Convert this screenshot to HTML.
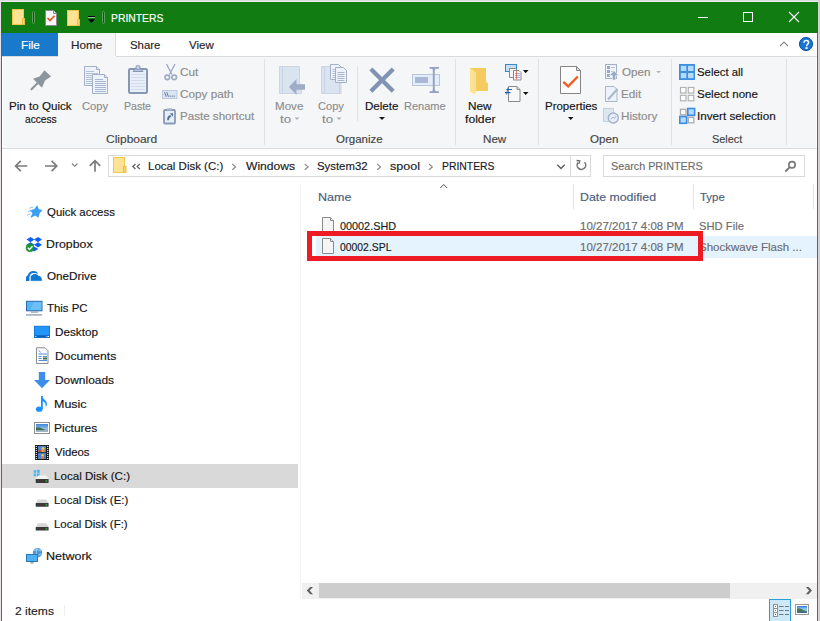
<!DOCTYPE html>
<html><head><meta charset="utf-8"><style>
html,body{margin:0;padding:0;}
body{width:820px;height:621px;position:relative;overflow:hidden;background:#fff;font-family:"Liberation Sans",sans-serif;}
.r{position:absolute;}
.t{position:absolute;font-size:12px;line-height:20px;white-space:nowrap;transform-origin:0 0;-webkit-text-stroke:0.16px currentColor;}
svg{position:absolute;overflow:visible}
</style></head><body>
<div class="r" style="left:0px;top:0px;width:820px;height:1px;background:#dcdcdc;"></div>
<div class="r" style="left:0px;top:1px;width:820px;height:1px;background:#f0eff0;"></div>
<div class="r" style="left:0px;top:0px;width:1px;height:621px;background:#e9e2e9;"></div>
<div class="r" style="left:818px;top:0px;width:1px;height:621px;background:#d9d3d9;"></div>
<div class="r" style="left:819px;top:0px;width:1px;height:621px;background:#cfcfcf;"></div>
<div class="r" style="left:1px;top:2px;width:817px;height:31px;background:#117c12;"></div>
<div class="r" style="left:1px;top:33px;width:1px;height:588px;background:#2b8b2d;"></div>
<div class="r" style="left:817px;top:33px;width:1px;height:588px;background:#2b8b2d;"></div>
<div class="r" style="left:2px;top:33px;width:56px;height:23px;background:#1979ca;"></div>
<div class="r" style="left:58px;top:33px;width:57px;height:24px;background:#f5f6f7;"></div>
<div class="r" style="left:115px;top:33px;width:1px;height:23px;background:#dadbdc;"></div>
<div class="r" style="left:2px;top:56px;width:56px;height:1px;background:#dadbdc;"></div>
<div class="r" style="left:116px;top:56px;width:701px;height:1px;background:#dadbdc;"></div>
<div class="r" style="left:3px;top:57px;width:813px;height:91px;background:#f5f6f7;"></div>
<div class="r" style="left:2px;top:148px;width:815px;height:1px;background:#dadbdc;"></div>
<div class="r" style="left:264px;top:59px;width:1px;height:86px;background:#e1e2e3;"></div>
<div class="r" style="left:455px;top:59px;width:1px;height:86px;background:#e1e2e3;"></div>
<div class="r" style="left:538px;top:59px;width:1px;height:86px;background:#e1e2e3;"></div>
<div class="r" style="left:671px;top:59px;width:1px;height:86px;background:#e1e2e3;"></div>
<div class="r" style="left:786px;top:59px;width:1px;height:86px;background:#e1e2e3;"></div>
<div class="r" style="left:357px;top:66px;width:1px;height:55px;background:#e1e2e3;"></div>
<div class="r" style="left:108px;top:155px;width:483px;height:22px;background:#fff;box-sizing:border-box;border:1px solid #d9d9d9"></div>
<div class="r" style="left:570px;top:156px;width:1px;height:20px;background:#d9d9d9;"></div>
<div class="r" style="left:603px;top:155px;width:202px;height:22px;background:#fff;box-sizing:border-box;border:1px solid #d9d9d9"></div>
<div class="r" style="left:2px;top:464px;width:296px;height:24px;background:#d9d9d9;"></div>
<div class="r" style="left:300px;top:184px;width:1px;height:415px;background:#f4f4f4;"></div>
<div class="r" style="left:573px;top:184px;width:1px;height:25px;background:#e5e5e5;"></div>
<div class="r" style="left:693px;top:184px;width:1px;height:25px;background:#e5e5e5;"></div>
<div class="r" style="left:813px;top:184px;width:1px;height:25px;background:#e5e5e5;"></div>
<div class="r" style="left:316px;top:236px;width:501px;height:22px;background:#e5f3ff;"></div>
<div class="r" style="left:302px;top:583px;width:515px;height:16px;background:#f0f0f0;"></div>
<div class="r" style="left:319px;top:583px;width:411px;height:15px;background:#cdcdcd;"></div>
<div class="r" style="left:64px;top:605px;width:1px;height:11px;background:#efefef;"></div>
<div class="r" style="left:769px;top:599px;width:22px;height:24px;background:#cde8f6;box-sizing:border-box;border:1px solid #26a0da"></div>

<svg width="820" height="621" viewBox="0 0 820 621" style="left:0;top:0">
<!-- ===== Title bar ===== -->
<g>
  <rect x="12.5" y="9.5" width="11" height="15" fill="#ffe394" stroke="#f2c84c" stroke-width="1"/>
  <rect x="22.5" y="18.5" width="2" height="6" fill="#fcd56a" stroke="#e9bd45" stroke-width="1"/>
  <rect x="32.5" y="11.5" width="2" height="12" rx="1" fill="#0b5e0c" stroke="#5c9e5d" stroke-width="1"/>
  <path d="M45.5 10.5 H53.5 L56.5 13.5 V25.5 H45.5 Z" fill="#f7f7f7" stroke="#8d8590" stroke-width="1"/>
  <path d="M53.5 10.5 V13.5 H56.5" fill="#dcdcdc" stroke="#8d8590" stroke-width="1"/>
  <path d="M47.5 18 L50 20.5 L54.5 15.8" fill="none" stroke="#e5541d" stroke-width="1.6"/>
  <rect x="67.5" y="10.5" width="11" height="15" fill="#ffe394" stroke="#f2c84c" stroke-width="1"/>
  <rect x="77.5" y="19.5" width="2" height="6" fill="#fcd56a" stroke="#e9bd45" stroke-width="1"/>
  <rect x="88" y="16" width="7" height="1" fill="#000"/>
  <rect x="88" y="17" width="7" height="1" fill="#8fc08f"/>
  <path d="M88 19.3 H95 L91.5 23 Z" fill="#000"/>
  <rect x="102.5" y="11.5" width="2" height="12" rx="1" fill="#0b5e0c" stroke="#5c9e5d" stroke-width="1"/>
</g>
<!-- window controls -->
<g stroke="#fff" stroke-width="1" fill="none">
  <path d="M698 17.5 H708"/>
  <rect x="743.5" y="12.5" width="9" height="9"/>
  <path d="M789 12 L799 22 M799 12 L789 22" stroke-width="1.1"/>
</g>
<!-- collapse & help -->
<path d="M780 46 L784 42 L788 46" fill="none" stroke="#8a8a8a" stroke-width="1.1"/>
<circle cx="806" cy="44" r="6.6" fill="#1b74d0" stroke="#0b5aae" stroke-width="1"/>
<path d="M804 42.7 C804 41.2 805 40.5 806.4 40.5 C807.8 40.5 808.6 41.3 808.6 42.5 C808.6 44 806.6 44.4 806.6 46 V46.2" fill="none" stroke="#fff" stroke-width="1.5"/>
<rect x="805.5" y="47.2" width="2.1" height="1.8" fill="#fff"/>

<!-- ===== Ribbon: Clipboard ===== -->
<g>
  <path d="M44.5 70.2 L51 76.4 L45 80.5 L42 87.8 L33 78.8 L39.5 76.5 Z" fill="#8d969d"/>
  <path d="M37.5 83.3 L31.5 89.3" stroke="#8d969d" stroke-width="2.2" stroke-linecap="round"/>
</g>
<g stroke="#a3b0c8" stroke-width="1" >
  <path d="M84.5 66.5 H96.5 L99.5 69.5 V85.5 H84.5 Z" fill="#eef3fb"/>
  <path d="M96.5 66.5 V69.5 H99.5" fill="#dde5f2"/>
  <path d="M86 71.5 H94 M86 73.5 H98 M86 75.5 H92 M86 77.5 H92 M86 79.5 H92 M86 81.5 H92 M86 83.5 H92" stroke="#b3bfd3"/>
  <path d="M92.5 74.5 H104.5 L107.5 77.5 V93.5 H92.5 Z" fill="#eef3fb"/>
  <path d="M104.5 74.5 V77.5 H107.5" fill="#dde5f2"/>
  <path d="M95 79.5 H103 M95 81.5 H106 M95 83.5 H106 M95 85.5 H106 M95 87.5 H106 M95 89.5 H106 M95 91.5 H106" stroke="#a9b6cc"/>
</g>
<g>
  <rect x="129" y="69" width="18" height="24" rx="1.2" fill="#e9eff9" stroke="#8797b3" stroke-width="2"/>
  <path d="M131 74.5 H145 M131 77.5 H145 M131 80.5 H145 M131 83.5 H145 M131 86.5 H145 M131 89.5 H145" stroke="#d3dcea" stroke-width="1"/>
  <path d="M133 71.5 L135 69 H141 L143 71.5 Z" fill="#b9c5da" stroke="#8797b3" stroke-width="1"/>
  <rect x="136" y="65.5" width="4" height="4" rx="1.5" fill="#c5d0e2" stroke="#8797b3" stroke-width="1"/>
</g>
<g fill="none" stroke="#9aa9c3" stroke-width="1.3">
  <path d="M166.5 64 L172 74.5 M175 64 L169.5 74.5"/>
  <circle cx="167.3" cy="77.3" r="2.3" stroke-width="1.6"/>
  <circle cx="174.2" cy="77.3" r="2.3" stroke-width="1.6"/>
</g>
<g>
  <rect x="162.5" y="90.5" width="14.5" height="8" fill="#dae4f2" stroke="#bcc8dc" stroke-width="1"/>
  <path d="M164.6 92.3 L166.2 96.7 M166.8 92.3 L168.4 96.7" fill="none" stroke="#536c90" stroke-width="0.9"/>
  <rect x="169.5" y="95.6" width="1.1" height="1.1" fill="#536c90"/><rect x="171.6" y="95.6" width="1.1" height="1.1" fill="#536c90"/><rect x="173.7" y="95.6" width="1.1" height="1.1" fill="#536c90"/>
</g>
<g>
  <rect x="164" y="110" width="11" height="13.5" rx="1" fill="#e8eef8" stroke="#8a9ab5" stroke-width="1.8"/>
  <rect x="167" y="108.3" width="5" height="2.2" fill="#a9b7cf"/>
  <path d="M168 120.2 C168 117.5 169 116.3 170.8 116" fill="none" stroke="#546f96" stroke-width="1.8"/>
  <path d="M169.8 113.3 H173 V116.8 Z" fill="#546f96"/>
</g>
<!-- ===== Organize ===== -->
<g>
  <path d="M279.5 66.5 H299.5 V83 L301.5 85 V93.5 H279.5 Z" fill="#dae3f0" stroke="#cbd5e4" stroke-width="1"/>
  <path d="M282.5 67 V93" stroke="#c8d2e2" stroke-width="1"/>
  <path d="M289 87 L296.5 79 V84.3 H305 V89.8 H296.5 V95 Z" fill="#9dadc6"/>
</g>
<g>
  <path d="M321.5 66.5 H341 V93.5 H321.5 Z" fill="#dae3f0" stroke="#cbd5e4" stroke-width="1"/>
  <path d="M324.5 67 V93 M339.5 82 V93" stroke="#c8d2e2" stroke-width="1"/>
  <path d="M330.5 64.5 H338.5 L341.5 67.5 V79.5 H330.5 Z" fill="#eef3fb" stroke="#a3b0c8" stroke-width="1"/>
  <path d="M332.5 69.5 H336 M332.5 71.5 H336 M332.5 73.5 H336 M332.5 75.5 H336 M332.5 77.5 H336" stroke="#b3bfd3" stroke-width="1"/>
  <path d="M335.5 67.5 H343.5 L346.5 70.5 V82.5 H335.5 Z" fill="#eef3fb" stroke="#a3b0c8" stroke-width="1"/>
  <path d="M337.5 72.5 H344.5 M337.5 74.5 H344.5 M337.5 76.5 H344.5 M337.5 78.5 H344.5 M337.5 80.5 H344.5" stroke="#a9b6cc" stroke-width="1"/>
</g>
<path d="M370.9 68.9 L393.2 91.2 M393.2 68.9 L370.9 91.2" stroke="#8093b3" stroke-width="4.3"/>
<g>
  <rect x="412.5" y="74.5" width="27" height="11" fill="#e5edfa" stroke="#b8c6dd" stroke-width="1"/>
  <rect x="415" y="77" width="13" height="6" fill="#a8b8d2"/>
  <path d="M433.8 68 V92" stroke="#95a5c0" stroke-width="2"/>
  <path d="M429.5 67.8 H439 M429.5 92.3 H439" stroke="#95a5c0" stroke-width="1.6"/>
  <path d="M430 68 Q433.8 68 433.8 71 Q433.8 68 438.5 68 M430 92 Q433.8 92 433.8 89 Q433.8 92 438.5 92" fill="none" stroke="#95a5c0" stroke-width="1.2"/>
</g>
<path d="M379 117 H385 L382 120 Z" fill="#1a1a1a"/>
<path d="M294.5 117.5 H299.5 L297 120 Z" fill="#b0b0b0"/>
<path d="M336.5 117.5 H341.5 L339 120 Z" fill="#b0b0b0"/>
<!-- ===== New ===== -->
<g>
  <path d="M470 68 H486 V81.5 L488 83.5 V91 H470 Z" fill="#f3cb5e"/>
  <path d="M470 68 L476 72.5 V91 L475 94.6 L470 91.6 Z" fill="#fbe293"/>
</g>
<g>
  <rect x="505.5" y="64.5" width="11" height="7" fill="#c4ddf2" stroke="#3b88c4" stroke-width="1"/>
  <path d="M509.5 68.5 H515.5 L517.5 70.5 V77.5 H509.5 Z" fill="#f4f4f4" stroke="#8a8a8a" stroke-width="1"/>
  <path d="M513.5 70.5 H519 L521 72.5 V80 H513.5 Z" fill="#f8f8f8" stroke="#8a8a8a" stroke-width="1"/>
  <path d="M515 73.5 H520 M515 75.5 H520 M515 77.5 H520" stroke="#6f9fe0" stroke-width="0.8"/>
  <path d="M516.5 71 V79.5" stroke="#e06060" stroke-width="0.8"/>
</g>
<path d="M523 70 H528.5 L525.7 73.2 Z" fill="#111"/>
<g>
  <path d="M508.5 86.5 H517 L520 89.5 V101.5 H508.5 Z" fill="#f7f7f7" stroke="#8a8a8a" stroke-width="1"/>
  <path d="M517 86.5 V89.5 H520" fill="#e0e0e0" stroke="#8a8a8a" stroke-width="1"/>
  <path d="M506.5 89.5 H512 M505 92.7 H510.5" stroke="#1f64b4" stroke-width="1.2"/>
  <path d="M508 87.5 L506.5 94.5" stroke="#1f64b4" stroke-width="0.9"/>
</g>
<path d="M523 92 H528.5 L525.7 95 Z" fill="#111"/>
<!-- ===== Open ===== -->
<g>
  <path d="M560.5 66.5 H576.5 L580.5 70.5 V93.5 H560.5 Z" fill="#fbfbfb" stroke="#858585" stroke-width="1"/>
  <path d="M576.5 66.5 V70.5 H580.5 Z" fill="#dedede" stroke="#858585" stroke-width="1"/>
  <path d="M563.3 81.8 L568.2 86.4 L577.8 76.5" fill="none" stroke="#f25a1e" stroke-width="2.3"/>
</g>
<path d="M568 117 H573.5 L570.7 120 Z" fill="#111"/>
<g>
  <rect x="605.5" y="64.5" width="11" height="14" fill="#eef3fb" stroke="#a3b0c8" stroke-width="1"/>
  <rect x="607" y="66" width="3" height="3" fill="#9aa9c3"/><rect x="607" y="70" width="3" height="3" fill="#9aa9c3"/><rect x="607" y="74" width="3" height="3" fill="#9aa9c3"/>
  <path d="M611 67.5 H615 M611 71.5 H615" stroke="#b8c4d8" stroke-width="1"/>
  <path d="M614 70.8 L618.8 75.6 H615.6 V80 H612.4 V75.6 H609.2 Z" fill="#9aa9c3" stroke="#f5f6f7" stroke-width="0.6"/>
</g>
<path d="M656 71 H661 L658.5 73.3 Z" fill="#b7b7b7"/>
<g>
  <path d="M605.5 86.5 H614 L617 89.5 V101.5 H605.5 Z" fill="#eef3fb" stroke="#a9b6cc" stroke-width="1"/>
  <path d="M608 99.5 L617.5 89" stroke="#a9b6cc" stroke-width="2"/>
</g>
<g>
  <rect x="603.5" y="108.5" width="10" height="13" fill="#dee6f2" stroke="#c4cfe0" stroke-width="1"/>
  <circle cx="613.3" cy="118" r="5" fill="#e8eef8" stroke="#a3b1c9" stroke-width="1.4"/>
  <path d="M611 119 L613 117 L614.5 118.5 L616 116" fill="none" stroke="#a3b1c9" stroke-width="0.9"/>
</g>
<!-- ===== Select ===== -->
<g>
  <rect x="679" y="64" width="16" height="16" fill="#3a8ee3"/>
  <rect x="680.8" y="65.8" width="5.5" height="5.2" fill="#b4dafd"/>
  <rect x="688" y="65.8" width="5.5" height="5.2" fill="#b4dafd"/>
  <rect x="680.8" y="73" width="5.5" height="5.2" fill="#b4dafd"/>
  <rect x="688" y="73" width="5.5" height="5.2" fill="#b4dafd"/>
</g>
<g fill="#fff" stroke="#b2b2b2" stroke-width="1.2">
  <rect x="680.5" y="87.5" width="5.5" height="5.5"/>
  <rect x="688.3" y="87.5" width="5.5" height="5.5"/>
  <rect x="680.5" y="95.3" width="5.5" height="5.5"/>
  <rect x="688.3" y="95.3" width="5.5" height="5.5"/>
</g>
<g>
  <rect x="680.5" y="109.3" width="5.5" height="5.5" fill="#fff" stroke="#ababab" stroke-width="1.3"/>
  <rect x="688.3" y="117.3" width="5.5" height="5.5" fill="#fff" stroke="#ababab" stroke-width="1.3"/>
  <rect x="687.8" y="108.5" width="6.8" height="6.8" fill="#b4dafd" stroke="#3a8ee3" stroke-width="1.6"/>
  <rect x="679.8" y="116.5" width="6.8" height="6.8" fill="#b4dafd" stroke="#3a8ee3" stroke-width="1.6"/>
</g>

<!-- ===== Address bar ===== -->
<g fill="none" stroke="#7b7b7b" stroke-width="1.7">
  <path d="M15.5 166 H27.3 M20.8 160.8 L15.6 166 L20.8 171.2"/>
  <path d="M45 166 H56.8 M51.6 160.8 L56.8 166 L51.6 171.2"/>
  <path d="M95 160.5 V171.8 M89.8 165.8 L95 160.6 L100.2 165.8"/>
  <path d="M72 163.5 L74.7 166.3 L77.4 163.5" stroke-width="1.1"/>
</g>
<g>
  <rect x="113.5" y="157.5" width="11" height="15" fill="#ffe394" stroke="#f2c84c" stroke-width="1"/>
  <rect x="123.5" y="166.5" width="2.5" height="6" fill="#fcd56a" stroke="#e9bd45" stroke-width="1"/>
</g>
<path d="M135.5 164 L132.8 166.5 L135.5 169 M139.8 164 L137.1 166.5 L139.8 169" fill="none" stroke="#606060" stroke-width="1.2"/>
<g fill="none" stroke="#8a8a8a" stroke-width="1.2">
  <path d="M232.3 164 L235.6 166.9 L232.3 169.8"/>
  <path d="M304.8 164 L308.1 166.9 L304.8 169.8"/>
  <path d="M377.2 164 L380.5 166.9 L377.2 169.8"/>
  <path d="M429 164 L432.3 166.9 L429 169.8"/>
</g>
<path d="M557.3 164.8 L561 168.5 L564.7 164.8" fill="none" stroke="#606060" stroke-width="1.5"/>
<path d="M584.6 162.2 A4.3 4.3 0 1 1 578 162.5" fill="none" stroke="#707070" stroke-width="1.5"/>
<path d="M576.5 160.5 L579.8 160.8 L578.8 164" fill="none" stroke="#707070" stroke-width="1.3"/>
<circle cx="792" cy="164.8" r="3.2" fill="none" stroke="#767676" stroke-width="1.6"/>
<path d="M789.5 167.3 L785.3 171.5" stroke="#767676" stroke-width="1.8"/>
<!-- header sort caret -->
<path d="M440.3 188 L443.7 184.5 L447.1 188" fill="none" stroke="#4f4f4f" stroke-width="1"/>
<!-- file icons -->
<g>
  <path d="M322.5 217.5 H330.5 L333.5 220.5 V233 H322.5 Z" fill="#f5f5f5" stroke="#8a8a8a" stroke-width="1"/>
  <path d="M330.5 217.5 V220.5 H333.5" fill="#e4e4e4" stroke="#8a8a8a" stroke-width="1"/>
  <path d="M322.5 238.5 H330.5 L333.5 241.5 V253.5 H322.5 Z" fill="#f5f5f5" stroke="#8a8a8a" stroke-width="1"/>
  <path d="M330.5 238.5 V241.5 H333.5" fill="#e4e4e4" stroke="#8a8a8a" stroke-width="1"/>
</g>
<!-- scrollbar arrows -->
<path d="M313 587 H310.2 L306.8 590.6 L310.2 594.2 H313 L309.6 590.6 Z" fill="#606060"/>
<path d="M805.8 587 H808.6 L812 590.6 L808.6 594.2 H805.8 L809.2 590.6 Z" fill="#606060"/>
<!-- view buttons -->
<g>
  <rect x="773.5" y="604.5" width="4" height="12" fill="#fff" stroke="#8e8e8e" stroke-width="1"/>
  <path d="M773.5 608.5 H777.5 M773.5 612.5 H777.5" stroke="#8e8e8e" stroke-width="1"/>
  <rect x="775" y="606" width="1" height="1" fill="#2a8a4a"/>
  <rect x="775" y="610" width="1" height="1" fill="#3f8fff"/>
  <rect x="775" y="614" width="1" height="1" fill="#e02020"/>
  <path d="M779 606.5 H783.5 M785 606.5 H789 M779 610.5 H783.5 M785 610.5 H789 M779 614.5 H783.5 M785 614.5 H789" stroke="#777" stroke-width="1"/>
</g>
<g>
  <rect x="795.5" y="604.5" width="13" height="10" fill="#fff" stroke="#999" stroke-width="1"/>
  <rect x="797" y="606" width="10" height="7" fill="#8cc0ec"/>
  <rect x="797" y="606" width="10" height="1.5" fill="#3f86dc"/>
  <path d="M797 608.5 Q801 607.8 804 610.5 L807 611.5 V613 H797 Z" fill="#4d7a58"/>
  <path d="M797 611.5 H807 V613 H797 Z" fill="#3a6aa0" opacity="0.8"/>
</g>

<!-- ===== Nav pane ===== -->
<!-- quick access star -->
<g>
  <path d="M37.2 205.8 L38.6 209.4 L42.2 210.3 L39.4 213 L38.2 217.3 L35.2 215.2 L30.8 217.5 L32.8 213.2 L30.2 210.4 L34.2 209.6 Z" fill="#3aa0f5" stroke="#1e88e5" stroke-width="0.5"/>
  <path d="M29 208.3 L33.5 207 M28 211.5 L31.5 210.8 M27 215.2 L30.5 214" stroke="#7fc0f2" stroke-width="0.9"/>
</g>
<!-- dropbox -->
<g fill="#0d62f5">
  <path d="M30.5 237 L34.5 239.6 L30.5 242.2 L26.5 239.6 Z"/>
  <path d="M38 237 L42 239.6 L38 242.2 L34 239.6 Z"/>
  <path d="M30.5 242.2 L34.5 244.8 L30.5 247.4 L26.5 244.8 Z"/>
  <path d="M38 242.2 L42 244.8 L38 247.4 L34 244.8 Z"/>
  <path d="M34.2 246.5 L38.2 249 L34.2 251.6 L30.2 249 Z"/>
</g>
<circle cx="30" cy="247.8" r="4" fill="#1f9a3a" stroke="#157a2a" stroke-width="0.5"/>
<path d="M27.8 247.8 L29.5 249.5 L32.5 246.2" fill="none" stroke="#fff" stroke-width="1.3"/>
<!-- onedrive -->
<path d="M26 281 V277.8 C26 276.6 26.8 275.6 27.8 275.2 C28.6 272.6 30.8 271.2 33.3 271.1 C35.3 271 37 271.8 37.9 273.4 L36.2 274.3 C35.4 273.3 34.4 272.9 33.2 273 C31.2 273.2 30 274.6 29.6 276.4 V281 Z" fill="#0f78d4"/>
<path d="M30.2 281.3 V277.3 C30.2 276 31 275.2 32 275 C32.6 273.8 33.8 273.6 35 273.6 C36.8 273.6 37.8 274.5 38.6 275.6 C40 275.4 41 276.3 41.5 277.6 C42.2 278 42.3 279 42.3 281.3 Z" fill="#0f78d4" stroke="#fff" stroke-width="0.9"/>
<!-- this pc -->
<g>
  <rect x="26.5" y="301.3" width="15.5" height="9.5" fill="#55b4f4" stroke="#2a6aa8" stroke-width="1"/>
  <path d="M34 302 L41.5 302 L41.5 310 L30 310 Z" fill="#7cc8f8" opacity="0.6"/>
  <rect x="31" y="311.3" width="7" height="1.5" fill="#9ab0c4"/>
  <rect x="26" y="314" width="16" height="1.8" fill="#a9b9c8"/>
</g>
<!-- desktop -->
<g>
  <rect x="34.5" y="326.3" width="15" height="11.2" fill="#2196f8" stroke="#1177dd" stroke-width="1"/>
  <rect x="35" y="335.3" width="14" height="2" fill="#0b5fb8"/>
  <rect x="35.3" y="336" width="1" height="1" fill="#fff"/><rect x="46.5" y="336" width="1" height="1" fill="#fff"/><rect x="48" y="336" width="1" height="1" fill="#fff"/>
</g>
<!-- documents -->
<g>
  <path d="M36.5 347.8 H45 L48 350.8 V363.5 H36.5 Z" fill="#fafafa" stroke="#8d8d8d" stroke-width="1"/>
  <path d="M39 350.5 L40.5 352.5 M38.5 354 H47 M38.5 356.5 H41.5 M43 356.5 H47 M38.5 358.5 H41.5 M38.5 360.5 H47" stroke="#3d86d6" stroke-width="0.9"/>
  <rect x="43" y="357.5" width="4" height="2" fill="#3a6a4a"/>
</g>
<!-- downloads -->
<path d="M38.8 372 H45.2 V380 H50 L42 388.3 L34 380 H38.8 Z" fill="#3b8fe8"/>
<!-- music -->
<g fill="#1e90ff">
  <ellipse cx="39.2" cy="409.2" rx="3.3" ry="2.6"/>
  <rect x="41" y="396" width="1.8" height="13"/>
  <path d="M41.5 396 C42.5 399 47.8 400.5 46.8 405.5 C46.3 406.5 45.8 406.8 45.5 406.5 C46.2 403.5 44.5 401.8 42 401 Z"/>
</g>
<!-- pictures -->
<defs>
  <linearGradient id="sky" x1="0" y1="0" x2="0" y2="1"><stop offset="0" stop-color="#3d86d8"/><stop offset="1" stop-color="#cfe6f5"/></linearGradient>
</defs>
<g>
  <rect x="34.5" y="422.5" width="15" height="11" fill="#fff" stroke="#8f8f8f" stroke-width="1"/>
  <rect x="36" y="424" width="12" height="8" fill="url(#sky)"/>
  <path d="M36 427.5 Q39.5 426.5 42.5 428.8 Q45 430.3 48 429.8 V430.5 H36 Z" fill="#3f6e50"/>
  <rect x="36" y="430.5" width="12" height="1.5" fill="#9fb8c8"/>
</g>
<!-- videos -->
<g>
  <rect x="35" y="445" width="14" height="15" fill="#1e1e1e"/>
  <rect x="38" y="446" width="8" height="6.3" fill="#4a82d0"/>
  <rect x="38" y="453" width="8" height="6" fill="#4a82d0"/>
  <circle cx="43" cy="448.5" r="1.6" fill="#f0c838"/>
  <rect x="41.5" y="449.5" width="3" height="2.5" fill="#e8a030"/>
  <rect x="38.5" y="450" width="2.5" height="2" fill="#c84040"/>
  <circle cx="42.5" cy="455.5" r="1.4" fill="#f0c838"/>
  <rect x="41" y="456.5" width="3" height="2.5" fill="#e07a30"/>
  <path d="M36.3 446 V459.5 M47.7 446 V459.5" stroke="#f4f4f4" stroke-width="1.1" stroke-dasharray="1.1 0.9"/>
</g>
<!-- drives -->
<g>
  <g fill="#48baf2">
  <rect x="33.6" y="470.2" width="2.6" height="2.6"/><rect x="36.9" y="469.8" width="2.9" height="3"/>
  <rect x="33.6" y="473.5" width="2.6" height="2.6"/><rect x="36.9" y="473.5" width="2.9" height="3"/>
  </g>
  <path d="M35.8 479 L38.2 475.6 H46.2 L48.6 479 Z" fill="#f2f2f2"/>
  <rect x="35.7" y="479" width="12.9" height="3.9" rx="0.6" fill="#3a3a3a"/>
  <rect x="45.6" y="480.5" width="1.6" height="1.1" fill="#3cd048"/>
</g>
<g>
  <path d="M35.8 503 L38.2 499.5 H46.2 L48.6 503 Z" fill="#d6d6d6"/>
  <rect x="35.7" y="503" width="12.9" height="3.7" rx="0.6" fill="#3a3a3a"/>
  <rect x="45.6" y="504.4" width="1.6" height="1.1" fill="#3cd048"/>
</g>
<g>
  <path d="M35.8 527 L38.2 523.3 H46.2 L48.6 527 Z" fill="#d6d6d6"/>
  <rect x="35.7" y="527" width="12.9" height="3.6" rx="0.6" fill="#3a3a3a"/>
  <rect x="45.6" y="528.4" width="1.6" height="1.1" fill="#3cd048"/>
</g>
<!-- network -->
<g>
  <circle cx="37.5" cy="552.8" r="4.7" fill="#4a9ad6"/>
  <path d="M34 550.5 Q37 548.5 41 550.8 M34.5 554.5 Q37.5 556.5 41.5 553.8 M37 548.3 Q35.5 552.5 37.5 557.3" fill="none" stroke="#b5dcf5" stroke-width="0.8"/>
  <rect x="26.5" y="554.5" width="11" height="7" fill="#4eb2f2" stroke="#2a78b8" stroke-width="1"/>
  <rect x="30.5" y="562" width="3" height="1.5" fill="#8aa0b0"/>
</g>
</svg>

<div class="t" style="left:110.70px;top:8px;color:#ffffff;font-size:11.5px;transform:scaleX(0.9000)">PRINTERS</div>
<div class="t" style="left:20.68px;top:35px;color:#ffffff;font-size:11.5px;transform:scaleX(1.0176)">File</div>
<div class="t" style="left:71.18px;top:35px;color:#262626;font-size:11.5px;transform:scaleX(1.0172)">Home</div>
<div class="t" style="left:130.26px;top:35px;color:#262626;font-size:11.5px;transform:scaleX(0.9914)">Share</div>
<div class="t" style="left:189.00px;top:35px;color:#262626;font-size:11.5px;transform:scaleX(1.0000)">View</div>
<div class="t" style="left:9.29px;top:96px;color:#141414;font-size:11.5px;transform:scaleX(1.0098)">Pin to Quick</div>
<div class="t" style="left:25.40px;top:109px;color:#141414;font-size:11.5px;transform:scaleX(0.8857)">access</div>
<div class="t" style="left:81.62px;top:96px;color:#8c8c8c;font-size:11.5px;transform:scaleX(0.9769)">Copy</div>
<div class="t" style="left:123.68px;top:96px;color:#8c8c8c;font-size:11.5px;transform:scaleX(0.9179)">Paste</div>
<div class="t" style="left:180.48px;top:62px;color:#8c8c8c;font-size:11.5px;transform:scaleX(1.0235)">Cut</div>
<div class="t" style="left:180.48px;top:84px;color:#8c8c8c;font-size:11.5px;transform:scaleX(1.0235)">Copy path</div>
<div class="t" style="left:180.49px;top:106px;color:#8c8c8c;font-size:11.5px;transform:scaleX(1.0083)">Paste shortcut</div>
<div class="t" style="left:106.46px;top:129px;color:#444444;font-size:11.5px;transform:scaleX(1.0417)">Clipboard</div>
<div class="t" style="left:274.59px;top:96px;color:#8c8c8c;font-size:11.5px;transform:scaleX(1.0074)">Move</div>
<div class="t" style="left:280.00px;top:109px;color:#8c8c8c;font-size:11.5px;transform:scaleX(1.1556)">to</div>
<div class="t" style="left:317.74px;top:96px;color:#8c8c8c;font-size:11.5px;transform:scaleX(0.9615)">Copy</div>
<div class="t" style="left:322.00px;top:109px;color:#8c8c8c;font-size:11.5px;transform:scaleX(1.1444)">to</div>
<div class="t" style="left:364.59px;top:96px;color:#141414;font-size:11.5px;transform:scaleX(1.0062)">Delete</div>
<div class="t" style="left:404.45px;top:96px;color:#8c8c8c;font-size:11.5px;transform:scaleX(0.9548)">Rename</div>
<div class="t" style="left:335.60px;top:129px;color:#444444;font-size:11.5px;transform:scaleX(0.9978)">Organize</div>
<div class="t" style="left:468.38px;top:96px;color:#141414;font-size:11.5px;transform:scaleX(1.0227)">New</div>
<div class="t" style="left:465.10px;top:109px;color:#141414;font-size:11.5px;transform:scaleX(1.0586)">folder</div>
<div class="t" style="left:483.49px;top:129px;color:#444444;font-size:11.5px;transform:scaleX(1.0091)">New</div>
<div class="t" style="left:544.60px;top:96px;color:#141414;font-size:11.5px;transform:scaleX(0.9980)">Properties</div>
<div class="t" style="left:589.60px;top:129px;color:#444444;font-size:11.5px;transform:scaleX(1.0071)">Open</div>
<div class="t" style="left:622.40px;top:62px;color:#8c8c8c;font-size:11.5px;transform:scaleX(1.0143)">Open</div>
<div class="t" style="left:621.38px;top:84px;color:#8c8c8c;font-size:11.5px;transform:scaleX(1.0158)">Edit</div>
<div class="t" style="left:621.39px;top:106px;color:#8c8c8c;font-size:11.5px;transform:scaleX(1.0143)">History</div>
<div class="t" style="left:697.31px;top:62px;color:#141414;font-size:11.5px;transform:scaleX(0.9867)">Select all</div>
<div class="t" style="left:697.30px;top:84px;color:#141414;font-size:11.5px;transform:scaleX(1.0034)">Select none</div>
<div class="t" style="left:697.28px;top:106px;color:#141414;font-size:11.5px;transform:scaleX(1.0171)">Invert selection</div>
<div class="t" style="left:712.35px;top:129px;color:#444444;font-size:11.5px;transform:scaleX(0.9484)">Select</div>
<div class="t" style="left:147.50px;top:156px;color:#1a1a1a;font-size:11.5px;transform:scaleX(0.9973)">Local Disk (C:)</div>
<div class="t" style="left:246.30px;top:156px;color:#1a1a1a;font-size:11.5px;transform:scaleX(1.0522)">Windows</div>
<div class="t" style="left:317.11px;top:156px;color:#1a1a1a;font-size:11.5px;transform:scaleX(0.9880)">System32</div>
<div class="t" style="left:390.01px;top:156px;color:#1a1a1a;font-size:11.5px;transform:scaleX(1.0885)">spool</div>
<div class="t" style="left:442.30px;top:156px;color:#1a1a1a;font-size:11.5px;transform:scaleX(0.9035)">PRINTERS</div>
<div class="t" style="left:611.06px;top:156px;color:#6d6d6d;font-size:11.5px;transform:scaleX(0.9375)">Search PRINTERS</div>
<div class="t" style="left:47.20px;top:202px;color:#141414;font-size:11.5px;transform:scaleX(0.9926)">Quick access</div>
<div class="t" style="left:46.13px;top:234px;color:#141414;font-size:11.5px;transform:scaleX(1.0714)">Dropbox</div>
<div class="t" style="left:47.20px;top:266px;color:#141414;font-size:11.5px;transform:scaleX(1.0167)">OneDrive</div>
<div class="t" style="left:47.20px;top:298px;color:#141414;font-size:11.5px;transform:scaleX(0.9925)">This PC</div>
<div class="t" style="left:54.68px;top:322px;color:#141414;font-size:11.5px;transform:scaleX(1.0171)">Desktop</div>
<div class="t" style="left:54.65px;top:346px;color:#141414;font-size:11.5px;transform:scaleX(1.0526)">Documents</div>
<div class="t" style="left:54.66px;top:370px;color:#141414;font-size:11.5px;transform:scaleX(1.0375)">Downloads</div>
<div class="t" style="left:54.31px;top:394px;color:#141414;font-size:11.5px;transform:scaleX(1.0862)">Music</div>
<div class="t" style="left:54.36px;top:418px;color:#141414;font-size:11.5px;transform:scaleX(1.0400)">Pictures</div>
<div class="t" style="left:55.20px;top:442px;color:#141414;font-size:11.5px;transform:scaleX(0.9886)">Videos</div>
<div class="t" style="left:54.19px;top:466px;color:#141414;font-size:11.5px;transform:scaleX(1.0081)">Local Disk (C:)</div>
<div class="t" style="left:54.21px;top:490px;color:#141414;font-size:11.5px;transform:scaleX(0.9932)">Local Disk (E:)</div>
<div class="t" style="left:54.21px;top:514px;color:#141414;font-size:11.5px;transform:scaleX(0.9932)">Local Disk (F:)</div>
<div class="t" style="left:46.41px;top:546px;color:#141414;font-size:11.5px;transform:scaleX(1.0878)">Network</div>
<div class="t" style="left:318.41px;top:187px;color:#4c607a;font-size:11.5px;transform:scaleX(1.0897)">Name</div>
<div class="t" style="left:579.63px;top:187px;color:#4c607a;font-size:11.5px;transform:scaleX(1.0710)">Date modified</div>
<div class="t" style="left:700.10px;top:187px;color:#4c607a;font-size:11.5px;transform:scaleX(0.9920)">Type</div>
<div class="t" style="left:340.00px;top:216px;color:#1a1a1a;font-size:11.5px;transform:scaleX(0.9424)">00002.SHD</div>
<div class="t" style="left:579.70px;top:216px;color:#6d6d6d;font-size:11.5px;transform:scaleX(1.0010)">10/27/2017 4:08 PM</div>
<div class="t" style="left:699.02px;top:216px;color:#6d6d6d;font-size:11.5px;transform:scaleX(0.9756)">SHD File</div>
<div class="t" style="left:340.20px;top:237px;color:#1a1a1a;font-size:11.5px;transform:scaleX(0.9035)">00002.SPL</div>
<div class="t" style="left:579.70px;top:237px;color:#6d6d6d;font-size:11.5px;transform:scaleX(1.0010)">10/27/2017 4:08 PM</div>
<div class="t" style="left:699.00px;top:237px;color:#6d6d6d;font-size:11.5px;transform:scaleX(1.0000)">Shockwave Flash ...</div>
<div class="t" style="left:14.85px;top:601px;color:#1f1f1f;font-size:11.5px;transform:scaleX(1.0500)">2 items</div>
<div class="r" style="left:307px;top:231px;width:396px;height:30px;background:transparent;box-sizing:border-box;border:5px solid #ed1c24"></div>
</body></html>
